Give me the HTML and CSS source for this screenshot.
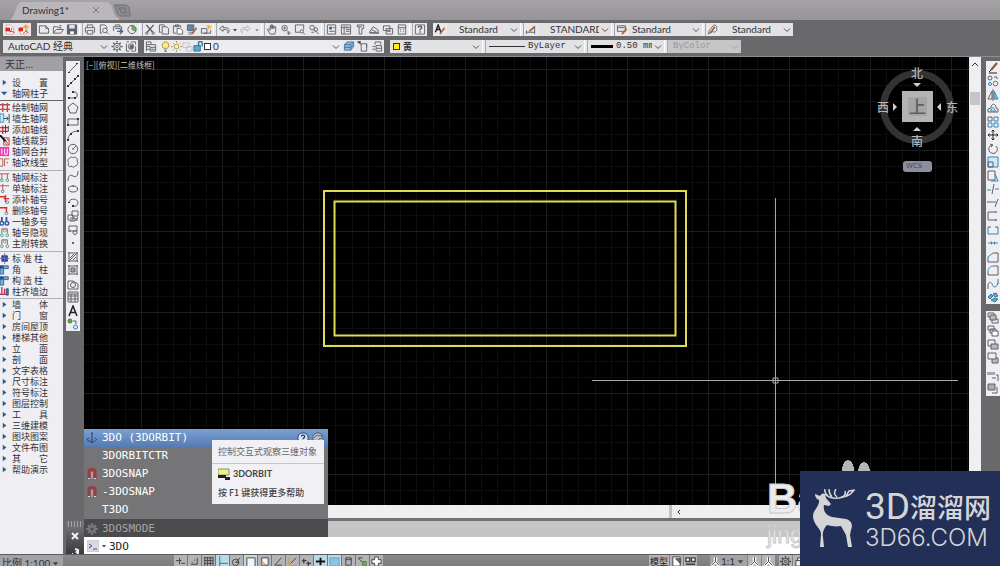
FILE: index.html
```html
<!DOCTYPE html>
<html lang="zh-CN">
<head>
<meta charset="utf-8">
<title>Drawing1*</title>
<link rel="stylesheet" href="styles.css">
</head>
<body>
<svg class="defs" aria-hidden="true">
  <symbol id="pdf" viewBox="0 0 12 12"><path d="M2 1h5l3 3v7H2z" fill="#fff" stroke="#c9a9a4"/><path d="M1 4h5v4H1z" fill="#d8281c" stroke="none"/><path d="M5 9c2-1 3-3 3-5M6 8l5 1" stroke="#d8281c"/></symbol>
  <symbol id="pdfstar" viewBox="0 0 12 12"><path d="M2 4h7v7H2z" fill="#fff" stroke="#c9a9a4"/><path d="M0 4h5v4H0z" fill="#d8281c" stroke="none"/><path d="M8 0v7M5 3h7M6 1l4 4M10 1L6 5" stroke="#f0a020"/><path d="M5 10c2-1 3-2 3-3l3 3" stroke="#d8281c"/></symbol>
  <symbol id="new" viewBox="0 0 12 12"><path d="M1 2h7l3 3v5H1zM8 2v3h3"/></symbol>
  <symbol id="open" viewBox="0 0 12 12"><path d="M1 10V3h4l1 1h3v2M1 10l3-4h8l-3 4zM7 2h3"/></symbol>
  <symbol id="save" viewBox="0 0 12 12"><path d="M1 1h10v10H1z" fill="#5a6070"/><path d="M3 1h6v4H3z" fill="#dfe3ea" stroke="none"/><path d="M4 8h4v3H4z" fill="#fff" stroke="none"/></symbol>
  <symbol id="print" viewBox="0 0 12 12"><path d="M3 4V1h6v3M2 9H1V4h10v5h-1M3 7h6v4H3z"/></symbol>
  <symbol id="preview" viewBox="0 0 12 12"><path d="M4 10H2V1h5l2 2v2"/><circle cx="7" cy="7" r="2.5"/><path d="M9 9l2 2"/></symbol>
  <symbol id="publish" viewBox="0 0 12 12"><path d="M3 3V1h5v2M2 7H1V3h9v4M3 5h6"/><path d="M5 8h5M8 6l3 2-3 3" stroke="#2b6fa8" stroke-width="1.500"/></symbol>
  <symbol id="dwf" viewBox="0 0 12 12"><circle cx="6" cy="6" r="4.5"/><path d="M6 6V2l4 2v4z" fill="#78b45c" stroke="#5b8e44"/></symbol>
  <symbol id="cut" viewBox="0 0 12 12"><path d="M2 1l7 8M10 1L3 9" stroke-width="1.500"/><circle cx="2.500" cy="10" r="1.300"/><circle cx="9.500" cy="10" r="1.300"/></symbol>
  <symbol id="copy" viewBox="0 0 12 12"><path d="M3 9H1V1h5l1 1M4 3h5l2 2v6H4z"/></symbol>
  <symbol id="paste" viewBox="0 0 12 12"><path d="M4 10H1V2h8v2M3 1h4v2H3z"/><path d="M5 5h4l2 2v4H5z" fill="#fff"/></symbol>
  <symbol id="match" viewBox="0 0 12 12"><path d="M1 1h7v6H1z" fill="#5f87b5"/><path d="M2 9h6M2 11h4" stroke="#777"/><path d="M11 4L6 11" stroke="#b06a34" stroke-width="2"/></symbol>
  <symbol id="blockedit" viewBox="0 0 12 12"><path d="M1 5h6v5H1zM4 10h7V7"/><path d="M9 1v5M7 3h5M7 1l4 4" stroke="#eda52c"/></symbol>
  <symbol id="undo" viewBox="0 0 12 12"><path d="M5 2L1 5l4 3V6h3c2 0 3 2 2 4 3-2 2-6-2-6H5z"/></symbol>
  <symbol id="redo" viewBox="0 0 12 12"><path d="M7 2l4 3-4 3V6H4c-2 0-3 2-2 4-3-2-2-6 2-6h3z" stroke="#b4b4b9"/></symbol>
  <symbol id="hand" viewBox="0 0 12 12"><path d="M4 11L1 6c0-1 1-1 3 1V2c1-1 1 0 1 0v3V1h1.500v4V2H8v3l.5-2H10v4l-1 4z"/></symbol>
  <symbol id="zoomrt" viewBox="0 0 12 12"><circle cx="4.500" cy="4.500" r="3"/><path d="M3 4.500h3M4.500 3v3M7 7l2 2M9 8v4M7 10h4"/></symbol>
  <symbol id="zoomwin" viewBox="0 0 12 12"><path d="M6 9H1V1h9v5"/><circle cx="8" cy="8" r="1.800"/><path d="M9 9l2.500 2.500"/></symbol>
  <symbol id="zoomprev" viewBox="0 0 12 12"><circle cx="4" cy="4" r="2.500"/><path d="M6 6l5 5M6 9H3"/><circle cx="8" cy="6" r="2"/></symbol>
  <symbol id="props" viewBox="0 0 12 12"><path d="M1 1h9v10H1z"/><path d="M3 3h3v3H3z" fill="#2d65a5" stroke="none"/><path d="M7 4h2M3 8h6"/></symbol>
  <symbol id="center" viewBox="0 0 12 12"><path d="M1 1h10v10H1zM1 4h10M4 4v7M6 6h4M6 8h4M4 2v2M7 2v2"/></symbol>
  <symbol id="palette" viewBox="0 0 12 12"><path d="M3 1h7v4H8v6H5V3H3zM5 3h3"/></symbol>
  <symbol id="sheet" viewBox="0 0 12 12"><path d="M1 9l4-6 5 3 1 4zM3 6l6 3M1 10h10"/></symbol>
  <symbol id="markup" viewBox="0 0 12 12"><path d="M1 2h7v5H1zM4 5h7v6H4zM5 8h4"/></symbol>
  <symbol id="calc" viewBox="0 0 12 12"><path d="M2 1h8v10H2zM2 4h8M4 6h1M7 6h1M4 8h1M7 8h1"/></symbol>
  <symbol id="help" viewBox="0 0 12 12"><path d="M1 1h10v10H1z"/><path d="M4 4c0-2 4-2 4 0 0 1-2 1-2 3M6 8v1.500" stroke-width="1.500"/></symbol>
  <symbol id="textstyle" viewBox="0 0 12 12"><path d="M1 9L4 1l3 8M2 6h4" stroke="#222" stroke-width="1.500"/><path d="M11 4L6 11" stroke="#b06a34" stroke-width="2"/></symbol>
  <symbol id="dimstyle" viewBox="0 0 12 12"><path d="M1 7v4M1 9h9M10 2v9"/><path d="M10 3L4 8" stroke="#a1653c" stroke-width="2"/></symbol>
  <symbol id="tablestyle" viewBox="0 0 12 12"><path d="M1 2h9v6H1zM1 4h9"/><path d="M11 5L6 11" stroke="#b06a34" stroke-width="2"/></symbol>
  <symbol id="leader" viewBox="0 0 12 12"><path d="M1 11l1-4 4-5c2-2 5 0 4 3 1 3-3 5-5 3z"/><path d="M8 3L3 10" stroke="#a1653c" stroke-width="2"/></symbol>
  <symbol id="gear" viewBox="0 0 12 12"><path d="M6 0v2M6 10v2M0 6h2M10 6h2M2 2l1.500 1.500M8.500 8.500L10 10M2 10l1.500-1.500M8.500 3.500L10 2" stroke-width="1.500"/><circle cx="6" cy="6" r="3.500"/><circle cx="6" cy="6" r="1.300"/></symbol>
  <symbol id="cog" viewBox="0 0 12 12"><path d="M6 0v12M0 6h12M2 2l8 8M2 10l8-8" stroke-width="2"/><circle cx="6" cy="6" r="2.500" stroke-width="3"/><circle cx="6" cy="6" r="1.500" fill="#4b4a4c" stroke="none"/></symbol>
  <symbol id="wsave" viewBox="0 0 12 12"><path d="M1 1h3M6 1h5v3M1 3v8h3M11 6v5H6"/><circle cx="6" cy="6" r="3"/><path d="M5 5h3v3H5z" fill="#66666b"/></symbol>
  <symbol id="layers" viewBox="0 0 12 12"><path d="M1 1h5v3H1zM1 6h4M1 9h4M1 4v7M6 4h5v7H5V7h6M6 9h4"/></symbol>
  <symbol id="bulb" viewBox="0 0 12 12"><path d="M4 8C1 5 3 1 6 1s5 4 2 7z" fill="#ffe98a" stroke="#a58c39"/><path d="M4.500 10h3M5 11.500h2"/></symbol>
  <symbol id="sun" viewBox="0 0 12 12"><circle cx="6" cy="6" r="2.500" fill="#fff0ad" stroke="#a48c4f"/><path d="M6 0v2M6 10v2M0 6h2M10 6h2M2 2l1 1M9 9l1 1M2 10l1-1M9 3l1-1" stroke="#a48c4f"/></symbol>
  <symbol id="vp" viewBox="0 0 12 12"><path d="M1 2h7v5H1zM5 6h6v5H5z" stroke="#c3c3c7"/></symbol>
  <symbol id="unlock" viewBox="0 0 12 12"><path d="M1 5h7v6H1z" fill="#58a9cf" stroke="#2d7295"/><path d="M6 5V2c0-2 4-2 4 0v4" stroke="#36708c" stroke-width="1.500"/></symbol>
  <symbol id="lay1" viewBox="0 0 12 12"><path d="M1 4l3-3h7v5l-3 4H1z" fill="#8fb9dd" stroke="#47759d"/><path d="M1 4h7v6M8 4l3-3M1 7h7l3-3" stroke="#47759d"/></symbol>
  <symbol id="lay2" viewBox="0 0 12 12"><path d="M4 3h6v8H4zM10 3v4M1 1l3 3" /><path d="M0 1l3-1v3z" fill="#333"/></symbol>
  <symbol id="lay3" viewBox="0 0 12 12"><path d="M4 4V1h6v3M5 5h6v6H5zM5 8h6M1 6h3M1 9h3"/></symbol>
  <symbol id="chev" viewBox="0 0 8 8"><path d="M1 2.500l3 3 3-3" stroke="#55555a"/></symbol>
  <symbol id="car" viewBox="0 0 8 8"><path d="M2 3h4L4 5.500z" fill="#444" stroke="none"/></symbol>

  <symbol id="line" viewBox="0 0 12 12"><path d="M2 10l8-8"/><path d="M1 10h2v1H1zM9 1h2v1H9z" fill="#333" stroke="none"/></symbol>
  <symbol id="xline" viewBox="0 0 12 12"><path d="M1 11L11 1"/><path d="M3 7h2v2H3zM7 3h2v2H7zM0 10h2v2H0zM10 0h2v2h-2z" fill="#333" stroke="none"/></symbol>
  <symbol id="pline" viewBox="0 0 12 12"><path d="M5 3h3c3 0 3 6 0 6H2"/><path d="M1 8h2v2H1zM5 2h2v2H5zM7 8h2v2H7z" fill="#333" stroke="none"/></symbol>
  <symbol id="poly" viewBox="0 0 12 12"><path d="M6 1l5 4-2 6H3L1 5z"/></symbol>
  <symbol id="rect" viewBox="0 0 12 12"><path d="M1 3h10v6H1z"/><path d="M0 8h2v2H0zM10 2h2v2h-2z" fill="#333" stroke="none"/></symbol>
  <symbol id="arc" viewBox="0 0 12 12"><path d="M1 11C1 6 5 2 11 2"/><path d="M0 10h2v2H0zM3 4h2v2H3zM10 1h2v2h-2z" fill="#333" stroke="none"/></symbol>
  <symbol id="circ" viewBox="0 0 12 12"><circle cx="6" cy="6" r="4.700"/><path d="M6 6l3-3M5 6h2"/></symbol>
  <symbol id="cloud" viewBox="0 0 12 12"><path d="M3 2c2-2 3 0 3 0 2-2 5 0 4 3 2 2 0 5-2 5-1 2-3 1-3 0-3 2-5-1-3-3-2-1-1-5 1-5z"/></symbol>
  <symbol id="spline" viewBox="0 0 12 12"><path d="M1 11c0-5 2-7 5-5s5 0 5-5"/></symbol>
  <symbol id="ell" viewBox="0 0 12 12"><ellipse cx="6" cy="6" rx="4.500" ry="3"/><path d="M1 6h1M6 2.500v1M10 6h1" stroke-width="2"/></symbol>
  <symbol id="ellarc" viewBox="0 0 12 12"><path d="M2 5c1-4 9-4 9 1 0 2-2 4-5 3"/><path d="M5 8h2v2H5zM1 5h2v1H1z" fill="#333" stroke="none"/></symbol>
  <symbol id="ins" viewBox="0 0 12 12"><path d="M5 1h6v5H5zM1 5h5v5H1z"/><path d="M3 8h5v3H3M10 8v3M11 7l-3 4"/></symbol>
  <symbol id="mkb" viewBox="0 0 12 12"><path d="M2 2h8v5H2zM1 7h3"/><circle cx="8" cy="8.500" r="2"/></symbol>
  <symbol id="pt" viewBox="0 0 12 12"><circle cx="6" cy="6" r="1" fill="#333" stroke="none"/></symbol>
  <symbol id="hatch" viewBox="0 0 12 12"><path d="M1 2h10M2 1v10M10 1v10M1 10h10M3 7l4-4M3 9l6-6M6 9l3-3"/></symbol>
  <symbol id="grad" viewBox="0 0 12 12"><path d="M1 2h10M2 1v10M10 1v10M1 10h10"/><path d="M4 4h4v4H4z" fill="#a2a2a7"/></symbol>
  <symbol id="region" viewBox="0 0 12 12"><path d="M1 3h5l5 3v5H1z"/><circle cx="6" cy="7" r="2.500"/></symbol>
  <symbol id="table" viewBox="0 0 12 12"><path d="M1 1h10v10H1zM1 5h10M1 8h10M4 3v8M8 3v8M1 3h10"/></symbol>
  <symbol id="mtext" viewBox="0 0 12 12"><path d="M2 11L6 1l4 10M3.500 7.500h5" stroke="#222" stroke-width="1.500"/></symbol>
  <symbol id="addsel" viewBox="0 0 12 12"><circle cx="3" cy="3" r="2" fill="#5fa449" stroke="#438032"/><circle cx="8.500" cy="9" r="2" stroke="#2d80b5"/><path d="M6 3h3v3"/></symbol>

  <symbol id="erase" viewBox="0 0 12 12"><path d="M10 1L4 8" stroke="#8b5430" stroke-width="2"/><path d="M4 8l-2 2M2 11h8" stroke="#222"/></symbol>
  <symbol id="mcopy" viewBox="0 0 12 12"><circle cx="3" cy="3" r="2"/><circle cx="8.500" cy="8.500" r="2.300" stroke="#3187b8"/><circle cx="3" cy="9" r="1.500" stroke="#3187b8"/><path d="M7 2h3v2"/></symbol>
  <symbol id="mirror" viewBox="0 0 12 12"><path d="M5 2v8H1zM6 0v12" /><path d="M7 2v8h4z" fill="#7fbbd7" stroke="#3187b8"/></symbol>
  <symbol id="offset" viewBox="0 0 12 12"><path d="M1 10V7l3-1c0-5 5-5 5 0l2 1v3z"/><path d="M3 9l2-2c0-2 2-2 2 0l2 2z" stroke="#3187b8"/></symbol>
  <symbol id="array" viewBox="0 0 12 12"><path d="M1 1h4v4H1z"/><path d="M7 1h4v4H7zM1 7h4v4H1zM7 7h4v4H7z" stroke="#3187b8"/></symbol>
  <symbol id="move" viewBox="0 0 12 12"><path d="M6 1v10M1 6h10M4.500 2.500L6 1l1.500 1.500M4.500 9.500L6 11l1.500-1.500M2.500 4.500L1 6l1.500 1.500M9.500 4.500L11 6 9.500 7.500" stroke="#222"/></symbol>
  <symbol id="rot" viewBox="0 0 12 12"><path d="M5 2a4.300 4.300 0 1 0 4 1M3 1l3 1-2 2"/></symbol>
  <symbol id="scale" viewBox="0 0 12 12"><path d="M1 1h10v10H1z" stroke="#3187b8" fill="#d3e9f3"/><path d="M1 6h5v5H1z"/></symbol>
  <symbol id="stretch" viewBox="0 0 12 12"><path d="M3 1h5v9H1V1h2"/><path d="M8 4l3 7H4" stroke="#3187b8"/></symbol>
  <symbol id="trim" viewBox="0 0 12 12"><path d="M7 1L5 11"/><path d="M0 7h4M8 6h4" stroke="#3187b8"/></symbol>
  <symbol id="extend" viewBox="0 0 12 12"><path d="M11 2L8 10M0 5h4"/><path d="M4 5h5" stroke="#3187b8"/></symbol>
  <symbol id="brk1" viewBox="0 0 12 12"><path d="M9 2H1v8h9M9 1v2M9 9v2"/></symbol>
  <symbol id="brk" viewBox="0 0 12 12"><path d="M1 3v7h10V3" stroke="#3187b8"/><path d="M1 3h3M8 3h3"/></symbol>
  <symbol id="join" viewBox="0 0 12 12"><path d="M1 6h4M7 6h4" stroke="#3187b8"/><path d="M4 4v4l2-2zM8 4v4L6 6z" fill="#3187b8" stroke="none"/></symbol>
  <symbol id="chamfer" viewBox="0 0 12 12"><path d="M6 2h5v9H1V6"/><path d="M1 6l5-4" stroke="#3187b8"/></symbol>
  <symbol id="fillet" viewBox="0 0 12 12"><path d="M7 2h4v9H1V8"/><path d="M1 8c0-4 2-6 6-6" stroke="#3187b8"/></symbol>
  <symbol id="blend" viewBox="0 0 12 12"><path d="M1 11V6M11 6V1"/><path d="M1 6c3-4 4 0 5 2s4 1 5-3" stroke="#3187b8"/></symbol>
  <symbol id="explode" viewBox="0 0 12 12"><path d="M1 6l3-3 2 2-3 3zM6 3l3-1 2 3-3 1zM4 9l4-2 3 1-3 3z" fill="#61abd0" stroke="#3179a3"/></symbol>
  <symbol id="ord1" viewBox="0 0 12 12"><path d="M1 1h6v4H1zM6 7h5v4H5V7"/><path d="M3 3h6v5H3z" fill="#b9b9bd"/></symbol>
  <symbol id="ord2" viewBox="0 0 12 12"><path d="M1 1h6v4H1zM3 4h6v4H3z"/><path d="M5 6h6v5H5z" fill="#fff"/></symbol>
  <symbol id="ord3" viewBox="0 0 12 12"><path d="M1 1h7v6H1z"/><path d="M4 5h7v5H4z" fill="#b9b9bd"/></symbol>
  <symbol id="ord4" viewBox="0 0 12 12"><path d="M5 6h6v5H5z" fill="#b9b9bd"/><path d="M1 1h8v6H1z" fill="#eee"/></symbol>
  <symbol id="ord5" viewBox="0 0 12 12"><path d="M1 2v3M3 2v3M5 2v3M7 2v3M5 8h4M9 5h2v6" /></symbol>
  <symbol id="ord6" viewBox="0 0 12 12"><path d="M1 1h7v6H1z" fill="#a9a9ae"/><path d="M5 10h5V4"/></symbol>

  <symbol id="g1" viewBox="0 0 12 12"><path d="M3 1v10M8 1v10M0 3h11M0 8h11" stroke="#c2484c" stroke-width="1.500"/></symbol>
  <symbol id="g2" viewBox="0 0 12 12"><path d="M0 1h4v9H0z" fill="#c9e7f3" stroke="#3a8cb5"/><path d="M4 6h5M7 4l2 2-2 2M10 1v10" stroke="#264566"/></symbol>
  <symbol id="g3" viewBox="0 0 12 12"><path d="M0 4h9M0 8h9M3 2v9" stroke="#cc3334" stroke-width="1.500"/><path d="M6 1v9M9 2v6" stroke="#333"/></symbol>
  <symbol id="g4" viewBox="0 0 12 12"><path d="M4 3h6v8H4zM4 3l6 8M4 7l4 4M7 3l3 4" stroke="#c2484c"/><path d="M0 0l6 7" stroke="#111" stroke-width="2"/></symbol>
  <symbol id="g5" viewBox="0 0 12 12"><path d="M0 1h10v10H0z" fill="#e83fb2" stroke="none"/><path d="M2 3v6M5 3v6h3V3" stroke="#fff"/></symbol>
  <symbol id="g6" viewBox="0 0 12 12"><path d="M0 2h3v8H0M5 10V2h5M8 5v2" stroke="#b95345"/></symbol>
  <symbol id="g7" viewBox="0 0 12 12"><path d="M0 2h10M2 2v6M8 2v6" stroke="#c2484c"/><circle cx="2" cy="9" r="1.500" stroke="#3b9494"/><circle cx="8" cy="9" r="1.500" stroke="#3b9494"/></symbol>
  <symbol id="g8" viewBox="0 0 12 12"><path d="M3 1v7M0 3h10" stroke="#c2484c"/><circle cx="3" cy="9" r="1.500" stroke="#3b9494"/></symbol>
  <symbol id="g9" viewBox="0 0 12 12"><path d="M0 3h6M6 1v8M4 5h6" stroke="#d62c2c" stroke-width="1.500"/><circle cx="8" cy="9" r="1.500" stroke="#3b9494"/></symbol>
  <symbol id="g10" viewBox="0 0 12 12"><path d="M0 3h8M7 3v5" stroke="#d62c2c" stroke-width="1.500"/><circle cx="7" cy="9" r="1.500" stroke="#3b9494"/></symbol>
  <symbol id="g11" viewBox="0 0 12 12"><path d="M2 1v5M7 1v5" stroke="#3556a5" stroke-width="2"/><circle cx="2" cy="8" r="2" stroke="#3556a5" stroke-width="1.500"/><circle cx="7.500" cy="8" r="2" stroke="#3556a5" stroke-width="1.500"/></symbol>
  <symbol id="g12" viewBox="0 0 12 12"><path d="M2 7V2h6v5" stroke="#666"/><circle cx="2" cy="9" r="1.500" stroke="#4d9d7c"/><circle cx="8" cy="9" r="1.500" stroke="#4d9d7c"/><circle cx="5" cy="4" r="1.500" stroke="#8e9b40"/></symbol>
  <symbol id="g13" viewBox="0 0 12 12"><path d="M2 3h6v6H2z" fill="#38439c" stroke="#38439c"/><path d="M5 0v12M0 6h10" stroke="#6a72b5"/></symbol>
  <symbol id="g14" viewBox="0 0 12 12"><path d="M0 2h9v3H4v6H0z" fill="#79aed2" stroke="#31679a"/><path d="M0 2h4v3H0z" fill="#244c82" stroke="none"/></symbol>
  <symbol id="g15" viewBox="0 0 12 12"><path d="M2 1v7M5 3v5M0 9h7" stroke="#c32c58" stroke-width="1.500"/><path d="M7 3h2v7H7z" fill="#35858f" stroke="#35567f"/></symbol>
  <symbol id="tri" viewBox="0 0 12 12"><path d="M3 3l4 3-4 3z" fill="#275e92" stroke="none"/></symbol>
  <symbol id="trid" viewBox="0 0 12 12"><path d="M1 4h7L4.500 8z" fill="#275e92" stroke="none"/></symbol>

  <symbol id="orbit" viewBox="0 0 12 12"><path d="M6 1v10M4 9l2 2 2-2M5 1h2M3 6c-3 1-2 3 1 3M9 6c2 1 2 2 0 3" stroke="#2f3c57"/></symbol>
  <symbol id="magnet" viewBox="0 0 12 12"><path d="M3 11V3c0-2 6-2 6 0v8" stroke="#9a3d42" stroke-width="3"/><path d="M2 10.500h2M8 10.500h2" stroke="#d9d9dc"/><path d="M6 4v7" stroke="#d6c6c8"/></symbol>
  <symbol id="q" viewBox="0 0 12 12"><circle cx="6" cy="6" r="5.200" fill="#dce6f5" stroke="#2a4679"/><path d="M4.500 4.500c0-2 3.200-2 3.200.2C7.700 6 6 5.800 6 7.300M6 8.500v1" stroke="#1f3766" stroke-width="1.300"/></symbol>
  <symbol id="web" viewBox="0 0 12 12"><circle cx="6" cy="6" r="5.200" fill="#b9c0cb" stroke="#535e70"/><path d="M2 6l3-3 2 1 2-1 1 3-3 1-1 3M3 8l2 1" stroke="#606b7c"/></symbol>
  <symbol id="orbitcmd" viewBox="0 0 12 12"><path d="M0 1h11v6H0z" fill="#eef090" stroke="#8f9066"/><path d="M0 7h8v3H0zM7 9h5v3H7z" fill="#222" stroke="none"/></symbol>
  <symbol id="prompt" viewBox="0 0 12 12"><path d="M0 0h12v12H0z" fill="#d9dae6" stroke="#c0c1ce"/><path d="M2 4l3 2-3 2M6 9h4" stroke="#4b5177"/></symbol>

  <symbol id="s1" viewBox="0 0 12 12"><path d="M1 5h6M5 2v7M7 8h4"/></symbol>
  <symbol id="s2" viewBox="0 0 12 12"><path d="M9 2v7H2M6 4v1M3 7h1"/></symbol>
  <symbol id="s3" viewBox="0 0 12 12"><path d="M1 2h10M1 5h10M1 8h10M2 1v10M5 1v10M8 1v10M11 1v10"/></symbol>
  <symbol id="s4" viewBox="0 0 12 12"><path d="M3 0v12M3 8h9" stroke="#39738a"/></symbol>
  <symbol id="s5" viewBox="0 0 12 12"><circle cx="5" cy="7" r="3.500"/><path d="M5 7l5-5M5 7h4"/></symbol>
  <symbol id="s6" viewBox="0 0 12 12"><path d="M2 2h9v10H2z" fill="#f4f4f6"/><path d="M1 2h3" stroke="#d68a40" stroke-width="2"/></symbol>
  <symbol id="s7" viewBox="0 0 12 12"><path d="M3 2h7v8H3z" fill="#f4f4f6"/><circle cx="4" cy="9" r="2" stroke="#c88a58"/></symbol>
  <symbol id="s8" viewBox="0 0 12 12"><path d="M9 2L2 10h8"/></symbol>
  <symbol id="s9" viewBox="0 0 12 12"><path d="M2 1v9h9" stroke="#db983e"/><path d="M4 8l6-6"/></symbol>
  <symbol id="s10" viewBox="0 0 12 12"><path d="M1 5h5M3 3v5M6 8h5M8 6v5" stroke-width="1.500"/></symbol>
  <symbol id="s11" viewBox="0 0 12 12"><path d="M1 6h10M6 2v8" stroke="#111" stroke-width="2"/></symbol>
  <symbol id="s12" viewBox="0 0 12 12"><path d="M1 2h10v9H1z" fill="#91c3e0" stroke="#6ba0c0"/></symbol>
  <symbol id="s13" viewBox="0 0 12 12"><path d="M3 2h6v8H3zM3 4h6"/></symbol>
  <symbol id="s14" viewBox="0 0 12 12"><path d="M1 2l5 5M2 2h4"/><path d="M6 6h4v5H6z" fill="#63b349" stroke="#488a33"/></symbol>
  <symbol id="s15" viewBox="0 0 12 12"><path d="M4 1h4v3h3v4H8v3H4V8H1V4h3z" fill="#fff"/></symbol>
  <symbol id="s16" viewBox="0 0 12 12"><path d="M2 1h8v10H2z" fill="#fff"/><path d="M5 3h5v5z" fill="#777"/></symbol>
  <symbol id="s17" viewBox="0 0 12 12"><path d="M1 2h4v4H1zM7 2h4v4H7zM1 9h10" fill="#fff" stroke-width="1.500"/></symbol>
  <symbol id="s18" viewBox="0 0 12 12"><path d="M6 1v5L2 11M6 6l4 5M4 3h4" stroke="#f8f8fa" stroke-width="3"/><path d="M6 1v5l-4 4M6 6l4 4"/></symbol>
  <symbol id="s19" viewBox="0 0 12 12"><path d="M2 5h7v6H2zM4 5V2h4v3" fill="#eee"/></symbol>
</svg>

<header class="tabs">
  <svg class="tab-shape" viewBox="0 0 132 20" aria-hidden="true"><path class="tab-body" d="M10 20C16 16 15 3 22 2h84c8 0 6 15 13 16v2z"/><path class="tab-new" d="M114 5h11c4 0 5 4 5 11h-9c-5 0-4-8-7-11z"/><path class="tab-new" d="M119 8h4c3 0 3 2 3 5h-3c-3 0-2-3-4-5z"/></svg>
  <a class="tab" href="#drawing">Drawing1*</a>
  <button class="tab-close" aria-label="关闭"><svg viewBox="0 0 8 8"><path d="M1 1l6 6M7 1L1 7"/></svg></button>
</header>

<div class="toolbars">
  <div class="row">
    <div class="bar"><button class="b"><svg><use href="#pdf"/></svg></button><button class="b"><svg><use href="#pdfstar"/></svg></button></div>
    <div class="bar">
      <button class="b"><svg><use href="#new"/></svg></button><button class="b"><svg><use href="#open"/></svg></button><button class="b"><svg><use href="#save"/></svg></button><i class="sep"></i>
      <button class="b"><svg><use href="#print"/></svg></button><button class="b"><svg><use href="#preview"/></svg></button><button class="b"><svg><use href="#publish"/></svg></button><button class="b"><svg><use href="#dwf"/></svg></button><i class="sep"></i>
      <button class="b"><svg><use href="#cut"/></svg></button><button class="b"><svg><use href="#copy"/></svg></button><button class="b"><svg><use href="#paste"/></svg></button><button class="b"><svg><use href="#match"/></svg></button><button class="b"><svg><use href="#blockedit"/></svg></button><i class="sep"></i>
      <button class="b"><svg><use href="#undo"/></svg></button><button class="b caret"><svg><use href="#car"/></svg></button><button class="b"><svg><use href="#redo"/></svg></button><button class="b caret dim"><svg><use href="#car"/></svg></button><i class="sep"></i>
      <button class="b"><svg><use href="#hand"/></svg></button><button class="b"><svg><use href="#zoomrt"/></svg></button><button class="b"><svg><use href="#zoomwin"/></svg></button><button class="b"><svg><use href="#zoomprev"/></svg></button><i class="sep"></i>
      <button class="b"><svg><use href="#props"/></svg></button><button class="b"><svg><use href="#center"/></svg></button><button class="b"><svg><use href="#palette"/></svg></button><button class="b"><svg><use href="#sheet"/></svg></button><button class="b"><svg><use href="#markup"/></svg></button><button class="b"><svg><use href="#calc"/></svg></button><i class="sep"></i>
      <button class="b"><svg><use href="#help"/></svg></button>
    </div>
    <div class="bar">
      <button class="b"><svg><use href="#textstyle"/></svg></button>
      <label class="field style"><select aria-label="文字样式"><option>Standard</option></select><svg class="chev"><use href="#chev"/></svg></label><i class="sep"></i>
      <button class="b"><svg><use href="#dimstyle"/></svg></button>
      <label class="field style"><select aria-label="标注样式"><option>STANDARD</option></select><svg class="chev"><use href="#chev"/></svg></label><i class="sep"></i>
      <button class="b"><svg><use href="#tablestyle"/></svg></button>
      <label class="field style near"><select aria-label="表格样式"><option>Standard</option></select><svg class="chev"><use href="#chev"/></svg></label><i class="sep"></i>
      <button class="b"><svg><use href="#leader"/></svg></button>
      <label class="field style"><select aria-label="引线样式"><option>Standard</option></select><svg class="chev"><use href="#chev"/></svg></label>
    </div>
  </div>
  <div class="row">
    <div class="bar">
      <label class="field workspace-pick"><select aria-label="工作空间"><option>AutoCAD 经典</option></select><svg class="chev"><use href="#chev"/></svg></label>
      <button class="b"><svg><use href="#gear"/></svg></button><button class="b"><svg><use href="#wsave"/></svg></button>
    </div>
    <div class="bar">
      <button class="b"><svg><use href="#layers"/></svg></button>
      <label class="field layer"><span class="states"><svg><use href="#bulb"/></svg><svg><use href="#sun"/></svg><svg><use href="#vp"/></svg><svg><use href="#unlock"/></svg><i class="swatch white"></i></span><select aria-label="图层"><option>0</option></select><svg class="chev"><use href="#chev"/></svg></label>
      <button class="b"><svg><use href="#lay1"/></svg></button><button class="b"><svg><use href="#lay2"/></svg></button><button class="b"><svg><use href="#lay3"/></svg></button>
    </div>
    <div class="bar mono">
      <label class="field color"><span class="states"><i class="swatch yellow"></i></span><select aria-label="颜色"><option>黄</option></select><svg class="chev"><use href="#chev"/></svg></label><i class="sep"></i>
      <label class="field ltype"><span class="states"><i class="rule"></i></span><select aria-label="线型"><option>ByLayer</option></select><svg class="chev"><use href="#chev"/></svg></label><i class="sep"></i>
      <label class="field weight"><span class="states"><i class="rule thick"></i></span><select aria-label="线宽"><option>0.50 mm</option></select><svg class="chev"><use href="#chev"/></svg></label><i class="sep"></i>
      <label class="field plot"><select aria-label="打印样式" disabled><option>ByColor</option></select><svg class="chev"><use href="#chev"/></svg></label>
    </div>
  </div>
</div>

<main class="workspace">
  <nav class="side">
    <h1 class="side-title">天正...</h1>
    <ul class="group">
      <li><a href="#m"><svg><use href="#tri"/></svg>设　　置</a></li>
      <li><a href="#m"><svg><use href="#trid"/></svg>轴网柱子</a></li>
    </ul>
    <ul class="group tools first">
      <li><a href="#m"><svg><use href="#g1"/></svg>绘制轴网</a></li>
      <li><a href="#m"><svg><use href="#g2"/></svg>墙生轴网</a></li>
      <li><a href="#m"><svg><use href="#g3"/></svg>添加轴线</a></li>
      <li><a href="#m"><svg><use href="#g4"/></svg>轴线裁剪</a></li>
      <li><a href="#m"><svg><use href="#g5"/></svg>轴网合并</a></li>
      <li><a href="#m"><svg><use href="#g6"/></svg>轴改线型</a></li>
    </ul>
    <ul class="group tools">
      <li><a href="#m"><svg><use href="#g7"/></svg>轴网标注</a></li>
      <li><a href="#m"><svg><use href="#g8"/></svg>单轴标注</a></li>
      <li><a href="#m"><svg><use href="#g9"/></svg>添补轴号</a></li>
      <li><a href="#m"><svg><use href="#g10"/></svg>删除轴号</a></li>
      <li><a href="#m"><svg><use href="#g11"/></svg>一轴多号</a></li>
      <li><a href="#m"><svg><use href="#g12"/></svg>轴号隐现</a></li>
      <li><a href="#m"><svg><use href="#g12"/></svg>主附转换</a></li>
    </ul>
    <ul class="group">
      <li><a href="#m"><svg><use href="#g13"/></svg>标 准 柱</a></li>
      <li><a href="#m"><svg><use href="#g14"/></svg>角　　柱</a></li>
      <li><a href="#m"><svg><use href="#g14"/></svg>构 造 柱</a></li>
      <li><a href="#m"><svg><use href="#g15"/></svg>柱齐墙边</a></li>
    </ul>
    <ul class="group last">
      <li><a href="#m"><svg><use href="#tri"/></svg>墙　　体</a></li>
      <li><a href="#m"><svg><use href="#tri"/></svg>门　　窗</a></li>
      <li><a href="#m"><svg><use href="#tri"/></svg>房间屋顶</a></li>
      <li><a href="#m"><svg><use href="#tri"/></svg>楼梯其他</a></li>
      <li><a href="#m"><svg><use href="#tri"/></svg>立　　面</a></li>
      <li><a href="#m"><svg><use href="#tri"/></svg>剖　　面</a></li>
      <li><a href="#m"><svg><use href="#tri"/></svg>文字表格</a></li>
      <li><a href="#m"><svg><use href="#tri"/></svg>尺寸标注</a></li>
      <li><a href="#m"><svg><use href="#tri"/></svg>符号标注</a></li>
      <li><a href="#m"><svg><use href="#tri"/></svg>图层控制</a></li>
      <li><a href="#m"><svg><use href="#tri"/></svg>工　　具</a></li>
      <li><a href="#m"><svg><use href="#tri"/></svg>三维建模</a></li>
      <li><a href="#m"><svg><use href="#tri"/></svg>图块图案</a></li>
      <li><a href="#m"><svg><use href="#tri"/></svg>文件布图</a></li>
      <li><a href="#m"><svg><use href="#tri"/></svg>其　　它</a></li>
      <li><a href="#m"><svg><use href="#tri"/></svg>帮助演示</a></li>
    </ul>
  </nav>

  <div class="left-dock">
    <div class="palette">
      <button class="b"><svg><use href="#line"/></svg></button><button class="b"><svg><use href="#xline"/></svg></button><button class="b"><svg><use href="#pline"/></svg></button><button class="b"><svg><use href="#poly"/></svg></button><button class="b"><svg><use href="#rect"/></svg></button><button class="b"><svg><use href="#arc"/></svg></button><button class="b"><svg><use href="#circ"/></svg></button><button class="b"><svg><use href="#cloud"/></svg></button><button class="b"><svg><use href="#spline"/></svg></button><button class="b"><svg><use href="#ell"/></svg></button><button class="b"><svg><use href="#ellarc"/></svg></button><button class="b"><svg><use href="#ins"/></svg></button><button class="b"><svg><use href="#mkb"/></svg></button><button class="b"><svg><use href="#pt"/></svg></button><button class="b"><svg><use href="#hatch"/></svg></button><button class="b"><svg><use href="#grad"/></svg></button><button class="b"><svg><use href="#region"/></svg></button><button class="b"><svg><use href="#table"/></svg></button><button class="b"><svg><use href="#mtext"/></svg></button><button class="b"><svg><use href="#addsel"/></svg></button>
    </div>
    <div class="cmd-handle"><i class="dots"></i><button class="b" aria-label="关闭命令行"><svg viewBox="0 0 12 12"><path d="M3 3l6 6M9 3L3 9"/></svg></button><button class="b" aria-label="自定义"><svg viewBox="0 0 12 12"><path d="M3 9h1M6 4l3 1v6M9 5L7 8"/></svg></button></div>
  </div>

  <section class="stage">
    <div class="view">
      <div class="canvas" id="drawing">
        <svg class="drawing" aria-hidden="true">
          <defs><pattern id="grid" x="57" y="12" width="81" height="81" patternUnits="userSpaceOnUse"><path class="minor" d="M16.500 0v81M32.500 0v81M49.500 0v81M65.500 0v81M0 16.500h81M0 32.500h81M0 49.500h81M0 65.500h81"/><path class="major" d="M.5 0v81M0 .5h81"/></pattern></defs>
          <rect width="100%" height="100%" fill="url(#grid)"/>
          <g class="wall"><rect x="240" y="134" width="362" height="155"/><rect x="250.500" y="144.500" width="341" height="134"/></g>
          <path class="cross" d="M691.500 141v307M508 323.500h366M689 321h5v5h-5z"/>
        </svg>
        <span class="vlabel">[−][俯视][二维线框]</span>
        <div class="compass">
          <svg viewBox="0 0 80 82" aria-hidden="true"><circle class="ring" cx="40" cy="41" r="33.500"/><path class="ptr" d="M36 17h8l-4 4zM36 65h8l-4-4zM16 37v8l4-4zM64 37v8l-4-4z"/><path class="cube" d="M25 25h31v31H25z"/><path class="cube-in" d="M31 31h19v19H31z"/></svg>
          <span class="n">北</span><span class="w">西</span><span class="e">东</span><span class="s">南</span><span class="top">上</span>
        </div>
        <button class="wcs">WCS</button>
        <div class="wm-paw"></div>
      </div>
      <div class="vscroll"><button class="b"><svg viewBox="0 0 12 12"><path d="M3 8l3-3 3 3"/></svg></button><i class="thumb"></i></div>
    </div>
    <div class="hscroll"><i class="grip"></i><button class="b"><svg viewBox="0 0 12 12"><path d="M7 4L5 6l2 2"/></svg></button></div>
    <div class="command">
      <div class="history"></div>
      <div class="entry"><svg class="prompt"><use href="#prompt"/></svg><svg class="caret8"><use href="#car"/></svg><input aria-label="命令" value="3DO"></div>
      <ul class="suggest">
        <li class="on"><svg><use href="#orbit"/></svg>3DO (3DORBIT)<span class="aids"><svg><use href="#q"/></svg><svg><use href="#web"/></svg></span></li>
        <li class="bare">3DORBITCTR</li>
        <li><svg><use href="#magnet"/></svg>3DOSNAP</li>
        <li><svg><use href="#magnet"/></svg>-3DOSNAP</li>
        <li class="bare">T3DO</li>
        <li class="var"><svg><use href="#cog"/></svg>3DOSMODE</li>
      </ul>
      <div class="tip">
        <p class="tip-desc">控制交互式观察三维对象</p>
        <p class="tip-cmd"><svg><use href="#orbitcmd"/></svg>3DORBIT</p>
        <p class="tip-help">按 F1 键获得更多帮助</p>
      </div>
      <div class="wm"><b>Bai</b><span>jingyan</span></div>
    </div>
  </section>

  <div class="right-dock">
    <div class="palette">
      <button class="b"><svg><use href="#erase"/></svg></button><button class="b"><svg><use href="#mcopy"/></svg></button><button class="b"><svg><use href="#mirror"/></svg></button><button class="b"><svg><use href="#offset"/></svg></button><button class="b"><svg><use href="#array"/></svg></button><button class="b"><svg><use href="#move"/></svg></button><button class="b"><svg><use href="#rot"/></svg></button><button class="b"><svg><use href="#scale"/></svg></button><button class="b"><svg><use href="#stretch"/></svg></button><button class="b"><svg><use href="#trim"/></svg></button><button class="b"><svg><use href="#extend"/></svg></button><button class="b"><svg><use href="#brk1"/></svg></button><button class="b"><svg><use href="#brk"/></svg></button><button class="b"><svg><use href="#join"/></svg></button><button class="b"><svg><use href="#chamfer"/></svg></button><button class="b"><svg><use href="#fillet"/></svg></button><button class="b"><svg><use href="#blend"/></svg></button><button class="b"><svg><use href="#explode"/></svg></button>
    </div>
    <div class="palette order">
      <button class="b"><svg><use href="#ord1"/></svg></button><button class="b"><svg><use href="#ord2"/></svg></button><button class="b"><svg><use href="#ord3"/></svg></button><button class="b"><svg><use href="#ord4"/></svg></button>
      <button class="b split"><svg><use href="#ord5"/></svg></button><button class="b"><svg><use href="#ord6"/></svg></button>
    </div>
  </div>
</main>

<footer class="status">
  <button class="scale">比例 1:100<svg><use href="#car"/></svg></button>
  <div class="toggles">
    <button class="b"><svg><use href="#s1"/></svg></button><button class="b"><svg><use href="#s2"/></svg></button><button class="b"><svg><use href="#s3"/></svg></button><button class="b lit"><svg><use href="#s4"/></svg></button><button class="b"><svg><use href="#s5"/></svg></button><button class="b lit"><svg><use href="#s6"/></svg></button><button class="b"><svg><use href="#s7"/></svg></button><button class="b"><svg><use href="#s8"/></svg></button><button class="b"><svg><use href="#s9"/></svg></button><button class="b"><svg><use href="#s10"/></svg></button><button class="b lit"><svg><use href="#s11"/></svg></button><button class="b lit"><svg><use href="#s12"/></svg></button><button class="b"><svg><use href="#s13"/></svg></button><button class="b"><svg><use href="#s14"/></svg></button><button class="b"><svg><use href="#s15"/></svg></button>
  </div>
  <div class="right-tools">
    <button class="model">模型</button><button class="b"><svg><use href="#s16"/></svg></button><button class="b"><svg><use href="#s17"/></svg></button>
    <button class="anno"><svg><use href="#s18"/></svg>1:1<svg class="caret8"><use href="#car"/></svg></button><button class="b"><svg><use href="#s18"/></svg></button><button class="b"><svg><use href="#s18"/></svg></button>
    <button class="b late"><svg><use href="#gear"/></svg></button><button class="b"><svg><use href="#s19"/></svg></button>
  </div>
</footer>

<aside class="brand">
  <svg viewBox="0 0 48 60" aria-hidden="true"><path class="body" d="M2 5l5 2c1-2 3-3 5-2l1 4 5 6-2 2-5-1c-1 5 1 10 8 12l14 2c6 2 7 6 5 11l-1 5 2 12h-4l-2-12-5-9c-5 1-10 0-14-1-3 3-5 8-4 12l1 10H7l1-13C8 39 0 36 0 27c0-6 7-10 6-16C3 10 2 7 2 5z"/><path class="horn" d="M12 5c5 5 12 5 18 3 6-1 8-3 11-7M15 7C12 4 11 2 12 0M19 8c-3-3-3-5-3-8M24 8c-3-2-3-5-1-8M28 8c3 0 5-3 4-6M33 7l3-5 6-1"/></svg>
  <div class="brand-text"><p class="brand-name"><span>3D</span>溜溜网</p><p class="brand-url">3D66.COM</p></div>
</aside>
</body>
</html>
```
FILE: styles.css
```css
* { box-sizing: border-box; margin: 0; padding: 0; }
html, body { height: 100%; }
body {
  display: flex;
  flex-direction: column;
  position: relative;
  overflow: hidden;
  background: #69686b;
  color: #333337;
  font: 10px/13px Lato, "Noto Sans CJK SC", sans-serif;
}
ul { list-style: none; }
a { color: inherit; text-decoration: none; }
button, select, input { font: inherit; color: inherit; border: 0; background: none; border-radius: 0; }
svg { display: block; width: 12px; height: 12px; fill: none; stroke: #5f6066; flex: none; }
.defs { position: absolute; width: 0; height: 0; }
.b { display: flex; align-items: center; justify-content: center; width: 14px; height: 13px; flex: none; }

/* file tabs */
.tabs {
  display: flex;
  align-items: center;
  height: 20px;
  flex: none;
  position: relative;
  padding-left: 22px;
  background: linear-gradient(#a6a3a7, #969498);
}
.tab-shape { position: absolute; left: 0; bottom: 0; width: 132px; height: 20px; stroke: none; }
.tab-body { fill: #b9b7bb; }
.tab-new { fill: #8d8b8f; stroke: #6e6d71; }
.tab { position: relative; width: 70px; }
.tab-close { position: relative; width: 8px; height: 8px; }
.tab-close svg { width: 8px; height: 8px; stroke: #7b797d; }

/* toolbars */
.toolbars { display: flex; flex-direction: column; gap: 4px; padding: 3px; flex: none; }
.row { display: flex; gap: 6px; }
.bar { display: flex; height: 13px; background: #e9e8ec; }
.bar .b svg { height: 11px; }
.bar .caret { width: 8px; }
.bar .caret svg, .caret8 { width: 8px; height: 8px; }
.dim { opacity: .5; }
.sep { width: 4px; flex: none; border-left: 1px solid #fbfbfc; border-right: 1px solid #aaa9ad; }
.field { display: flex; align-items: center; background: #e2e1e4; padding-right: 2px; gap: 2px; }
.field select { appearance: none; flex: 1; min-width: 0; height: 13px; line-height: 13px; text-overflow: clip; }
.field .chev { width: 8px; height: 8px; }
.states { display: flex; align-items: center; }
.style { width: 73px; padding-left: 12px; }
.near { padding-left: 3px; }
.workspace-pick { width: 107px; padding-left: 5px; }
.layer { width: 184px; padding-left: 2px; background: #ecebef; }
.layer .states svg { width: 11px; height: 11px; }
.swatch { width: 7px; height: 7px; border: 1px solid #333; }
.white { background: #fff; }
.yellow { background: #fff200; margin-right: 1px; }
.color { width: 92px; padding-left: 3px; }
.color select { font: bold 9px/13px "Noto Sans CJK SC", sans-serif; }
.ltype { width: 98px; padding-left: 3px; }
.weight { width: 76px; padding-left: 3px; }
.plot { width: 73px; padding-left: 5px; background: #c6c5c8; color: #88878b; }
.plot .chev { opacity: .3; }
.mono { font: 9px/13px "Liberation Mono", monospace; }
.rule { width: 36px; height: 1px; background: #333; margin-right: 1px; }
.thick { width: 22px; height: 3px; background: #000; }

/* main area */
.workspace { display: flex; flex: 1; min-height: 0; border-top: 1px solid #8d8c90; }
.side { width: 63px; flex: none; background: #efeef2; overflow: hidden; }
.side-title { font: 10px/14px "Noto Sans CJK SC", sans-serif; background: #a2a0a4; padding-left: 5px; margin-bottom: 6px; height: 14px; }
.group + .group { border-top: 1px solid #b3b2b6; margin-top: 1px; padding-top: 1px; }
.group + .first { border-color: #666; }
.side .last { padding-top: 0; }
.tools { padding-bottom: 1px; }
.group a { display: flex; align-items: center; height: 11px; font: 9px/11px "Noto Sans CJK SC", sans-serif; white-space: pre; }
.group svg { width: 11px; height: 11px; margin-right: 1px; }

.left-dock { display: flex; flex-direction: column; justify-content: space-between; width: 21px; flex: none; padding: 4px 0 0 3px; }
.palette { display: grid; grid-auto-rows: 13px 14px; width: 14px; background: #efeef2; }
.cmd-handle { display: flex; flex-direction: column; align-items: center; gap: 2px; width: 18px; height: 33px; overflow: hidden; background: linear-gradient(#7a797c, #3a393c); }
.cmd-handle svg { stroke: #f2f2f4; stroke-width: 2; }
.dots { width: 14px; height: 6px; flex: none; background: repeating-linear-gradient(90deg, #a5a4a8 0 1px, #6d6c70 1px 3px); }

.stage { display: flex; flex-direction: column; flex: 1; min-width: 0; }
.view { display: flex; flex: 1; min-height: 0; }
.canvas { flex: 1; min-width: 0; position: relative; background: #000; overflow: hidden; }
.drawing { width: 100%; height: 100%; stroke: none; }
.minor { stroke: #0c0d0f; }
.major { stroke: #1a1c1e; }
.wall { stroke: #dedc50; stroke-width: 2; }
.cross { stroke: #a9a9a5; }
.vlabel { position: absolute; left: 2px; top: 2px; color: #c3c3c3; font: 8px/12px "Noto Sans CJK SC", sans-serif; }
.compass { position: absolute; right: 12px; top: 9px; width: 80px; height: 82px; color: #b5b5b5; font: 500 12px/14px "Noto Sans CJK SC", sans-serif; }
.compass svg { width: 80px; height: 82px; stroke: none; }
.compass .ring { stroke: #333336; stroke-width: 7; }
.ptr { fill: #d0d0d0; }
.cube { fill: #b4b4b5; }
.cube-in { fill: #a3a5a6; }
.compass span { position: absolute; }
.n { left: 34px; top: 0; }
.s { left: 34px; bottom: 0; }
.w { left: 0; top: 34px; }
.e { right: -1px; top: 34px; }
.compass .top { left: 32px; top: 30px; font-size: 17px; line-height: 20px; color: #5d6062; }
.wcs { position: absolute; right: 37px; top: 104px; width: 29px; height: 11px; border-radius: 3px; background: #8d8d9c; color: #4b4b5c; font: 7px/11px "DejaVu Sans", sans-serif; text-align: left; padding-left: 3px; }
.wm-paw { position: absolute; right: 98px; bottom: 25px; width: 29px; height: 20px; background: radial-gradient(6px 10px at 6px 10px, #b5b5b5 95%, transparent), radial-gradient(6px 10px at 22px 12px, #b5b5b5 95%, transparent); }

.vscroll { width: 12px; flex: none; background: #efeef2; }
.vscroll .b { width: 12px; }
.vscroll svg, .hscroll svg { stroke: #333; }
.thumb { display: block; height: 13px; margin: 22px 1px 0; background: #c5c4c8; }
.hscroll { display: flex; height: 13px; flex: none; background: #efeef0; padding-left: 585px; }
.grip { width: 3px; background: #c1c0c3; }
.command { position: relative; border-top: 3px solid #727175; flex: none; }
.history { height: 16px; background: #c5c5c5; }
.entry { display: flex; align-items: center; height: 17px; background: #fff; padding-left: 3px; }
.entry .caret8 { margin: 0 1px; }
.entry input { flex: 1; min-width: 0; height: 17px; padding-top: 2px; color: #222; font: 11px/15px "DejaVu Sans Mono", monospace; }
.suggest { position: absolute; left: 0; bottom: 17px; width: 244px; background: #757476; color: #fff; font: 11px/18px "DejaVu Sans Mono", monospace; }
.suggest li { display: flex; align-items: center; height: 18px; padding: 0 4px 0 2px; gap: 4px; }
.suggest .bare { padding-left: 18px; }
.suggest .on { background: linear-gradient(#7ba0d2, #567bb4); }
.suggest .var { background: #4b4a4c; color: #a5a5a8; padding-top: 1px; }
.suggest .var svg { stroke: #77777b; }
.aids { display: flex; gap: 3px; margin-left: auto; }
.tip { position: absolute; left: 128px; bottom: 50px; width: 112px; background: #f1f1f5; color: #444448; font: 9px/18px "Noto Sans CJK SC", sans-serif; padding: 3px 0 2px; }
.tip p { display: flex; align-items: center; padding-left: 6px; gap: 3px; white-space: nowrap; height: 18px; }
.tip .tip-desc { height: 21px; border-bottom: 1px solid #c4c4c9; padding-bottom: 2px; color: #66666a; }
.tip .tip-cmd { font: bold 9px/20px Lato, sans-serif; height: 20px; }
.tip .tip-help { font-weight: 500; gap: 0; }
.wm { position: absolute; left: 683px; bottom: 2px; display: flex; flex-direction: column; color: #ececec; -webkit-text-stroke: 1px #c9c9cb; }
.wm b { font: bold 42px/38px "Liberation Sans", sans-serif; }
.wm span { font: 23px/34px "Liberation Sans", sans-serif; }

.right-dock { width: 19px; flex: none; padding: 4px 0 0 5px; }
.order { margin-top: 7px; grid-auto-rows: minmax(13px, auto) minmax(14px, auto); }
.split { margin-top: 4px; }

/* status bar */
.status { display: flex; align-items: flex-start; height: 12px; flex: none; overflow: hidden; border-top: 1px solid #5d5c5f; background: linear-gradient(#8b898d, #7d7b7f); }
.scale { display: flex; align-items: center; width: 63px; flex: none; padding: 2px 0 0 2px; background: #a3a1a5; font: 10px/13px Lato, "Noto Sans CJK SC", sans-serif; white-space: nowrap; }
.scale svg { width: 12px; height: 12px; }
.toggles { display: flex; gap: 1px; margin-left: 111px; background: #777679; }
.status .b { width: 13px; background: #b5b3b7; }
.status svg { width: 11px; height: 11px; stroke: #3e3f43; }
.status .lit { background: #b8dbe6; }
.right-tools { display: flex; gap: 1px; margin-left: 266px; }
.status .model { width: 20px; font: 9px/13px "Noto Sans CJK SC", sans-serif; background: #b5b3b7; color: #222; }
.anno { display: flex; align-items: center; margin-left: 12px; width: 37px; background: #a5a3a7; }
.status .late { margin-left: 3px; }

/* brand badge */
.brand { position: absolute; right: 0; bottom: 0; display: flex; align-items: center; width: 200px; height: 95px; padding: 0 8px 0 13px; gap: 4px; background: #222f57; color: #d5d5d8; }
.brand svg { width: 48px; height: 60px; stroke: none; }
.brand .body { fill: #d5d5d8; }
.brand .horn { stroke: #d5d5d8; stroke-width: 1.500; }
.brand-text { display: flex; flex-direction: column; gap: 4px; }
.brand-name { display: flex; align-items: center; height: 34px; font: 500 27px/34px "Noto Sans CJK SC", sans-serif; white-space: nowrap; }
.brand-name span { font: 37px/34px Roboto, sans-serif; }
.brand-url { font: 300 24px/20px Inter, sans-serif; white-space: nowrap; }
```
